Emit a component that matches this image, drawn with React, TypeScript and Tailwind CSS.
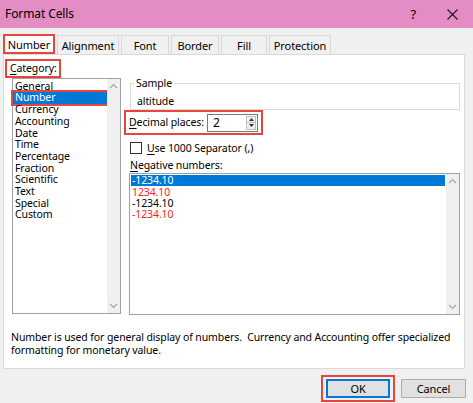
import React from "react";

const font = { fontFamily: '"Noto Sans", "Open Sans", Arial, sans-serif' };

const categories = [
  "General",
  "Number",
  "Currency",
  "Accounting",
  "Date",
  "Time",
  "Percentage",
  "Fraction",
  "Scientific",
  "Text",
  "Special",
  "Custom",
];

const negatives = [
  { v: "-1234.10", c: "text-white bg-[#0078d7]" },
  { v: "1234.10", c: "text-[#ff1a1a]" },
  { v: "-1234.10", c: "text-black" },
  { v: "-1234.10", c: "text-[#ff1a1a]" },
];

const tabs = [
  { t: "Number", w: "w-[52px]" },
  { t: "Alignment", w: "w-[62px]" },
  { t: "Font", w: "w-[48px]" },
  { t: "Border", w: "w-[48px]" },
  { t: "Fill", w: "w-[46px]" },
  { t: "Protection", w: "w-[62px]" },
];

function Chevron({ up }: { up?: boolean }) {
  return (
    <svg width="9" height="6" viewBox="0 0 9 6" className="text-[#a6a6a6]">
      <path
        d={up ? "M1 5 L4.5 1.5 L8 5" : "M1 1 L4.5 4.5 L8 1"}
        fill="none"
        stroke="currentColor"
        strokeWidth="1.2"
      />
    </svg>
  );
}

function Scrollbar() {
  return (
    <div className="flex w-[13px] shrink-0 flex-col items-center justify-between bg-[#f0f0f0] py-[4px]">
      <Chevron up />
      <Chevron />
    </div>
  );
}

export default function App() {
  return (
    <div
      className="relative h-[403px] w-[473px] overflow-hidden whitespace-nowrap bg-[#f0f0f0] text-[10.5px] leading-none tracking-[-0.1px] text-black"
      style={font}
    >
      {/* title bar */}
      <div className="flex h-[28px] items-center bg-[#e48cc4] pl-[5px] text-[12px]">
        <span className="flex-1">Format Cells</span>
        <span className="mr-[31px] text-[13px]">?</span>
        <svg width="11" height="11" viewBox="0 0 11 11" className="mr-[15px]">
          <path d="M0.5 0.5 L10.5 10.5 M10.5 0.5 L0.5 10.5" stroke="#1a1a1a" strokeWidth="1.1" />
        </svg>
      </div>

      {/* tabs */}
      <div className="ml-[3px] mt-[6px] flex h-[20px] items-stretch gap-[2px] text-[11px]">
        {tabs.map((tab, i) =>
          i === 0 ? (
            <div
              key={tab.t}
              className={`${tab.w} flex items-center justify-center border-2 border-[#e8453c] bg-white`}
            >
              {tab.t}
            </div>
          ) : (
            <div
              key={tab.t}
              className={`${tab.w} mt-[1px] flex items-center justify-center border border-b-0 border-[#d9d9d9] bg-[#f0f0f0]`}
            >
              {tab.t}
            </div>
          )
        )}
      </div>

      {/* panel */}
      <div className="ml-[3px] h-[315px] w-[462px] border border-[#d9d9d9] bg-white">
        <div className="flex">
          {/* category */}
          <div className="ml-[1px] mt-[4px] flex flex-col">
            <div className="flex h-[19px] w-[56px] items-center border-2 border-[#e8453c] pl-[3px]">
              <span className="underline decoration-1 underline-offset-2">C</span>ategory:
            </div>
            <div className="ml-[7px] flex h-[236px] w-[109px] border border-[#a0a0a0] bg-white">
              <div className="flex flex-1 flex-col pt-[1px]">
                {categories.map((c) =>
                  c === "Number" ? (
                    <div
                      key={c}
                      className="flex h-[12px] items-center bg-[#0078d7] pl-[2px] text-white outline-2 outline-[#e8453c]"
                    >
                      {c}
                    </div>
                  ) : (
                    <div key={c} className="flex h-[11.7px] items-center pl-[2px]">
                      {c}
                    </div>
                  )
                )}
              </div>
              <Scrollbar />
            </div>
          </div>

          {/* right side */}
          <div className="ml-[3px] mt-[28px] flex flex-col">
            <div className="relative ml-[6px] h-[27px] w-[330px] border border-[#dcdcdc]">
              <span className="absolute -top-[6px] left-[3px] bg-white px-[2px]">Sample</span>
              <div className="pl-[6px] pt-[12px]">altitude</div>
            </div>

            <div className="flex h-[25px] w-[139px] items-center border-2 border-[#e8453c] pl-[3px]">
              <span className="underline decoration-1 underline-offset-2">D</span>ecimal places:
              <div className="ml-auto mr-[3px] flex h-[18px] w-[51px] items-center border border-[#7a7a7a] bg-white">
                <span className="flex-1 pl-[5px] text-[12px]">2</span>
                <div className="mr-[1px] flex h-[14px] w-[10px] flex-col border border-[#c0c0c0] bg-[#f0f0f0]">
                  <div className="flex flex-1 items-center justify-center border-b border-[#c0c0c0]">
                    <svg width="5" height="3" viewBox="0 0 5 3">
                      <path d="M0 3 L2.5 0 L5 3Z" fill="#333" />
                    </svg>
                  </div>
                  <div className="flex flex-1 items-center justify-center">
                    <svg width="5" height="3" viewBox="0 0 5 3">
                      <path d="M0 0 L2.5 3 L5 0Z" fill="#333" />
                    </svg>
                  </div>
                </div>
              </div>
            </div>

            <div className="ml-[6px] mt-[7px] flex items-center">
              <div className="h-[12px] w-[12px] border border-[#333] bg-white" />
              <span className="ml-[5px]">
                <span className="underline decoration-1 underline-offset-2">U</span>se 1000 Separator (,)
              </span>
            </div>

            <div className="ml-[6px] mt-[6px] h-[11px]">
              <span className="underline decoration-1 underline-offset-2">N</span>egative numbers:
            </div>
            <div className="ml-[5px] mt-[2px] flex h-[142px] w-[331px] border border-[#a0a0a0] bg-white">
              <div className="flex flex-1 flex-col pl-[1px] pr-[1px] pt-[1px]">
                {negatives.map((n, i) => (
                  <div key={i} className={`flex h-[11.3px] items-center pl-[1px] ${n.c}`}>
                    {n.v}
                  </div>
                ))}
              </div>
              <Scrollbar />
            </div>
          </div>
        </div>

        <div className="ml-[7px] mt-[16px] leading-[13px]">
          Number is used for general display of numbers.&nbsp; Currency and Accounting offer specialized
          <br />
          formatting for monetary value.
        </div>
      </div>

      {/* buttons */}
      <div className="mr-[7px] mt-[6px] flex justify-end gap-[6px] text-[11px]">
        <div className="flex h-[27px] w-[74px] items-center justify-center border-2 border-[#e8453c]">
          <div className="flex h-[19px] w-[64px] items-center justify-center border-2 border-[#0078d7] bg-[#e1e1e1]">
            OK
          </div>
        </div>
        <div className="mt-[4px] flex h-[19px] w-[65px] items-center justify-center border border-[#adadad] bg-[#e1e1e1]">
          Cancel
        </div>
      </div>
    </div>
  );
}
